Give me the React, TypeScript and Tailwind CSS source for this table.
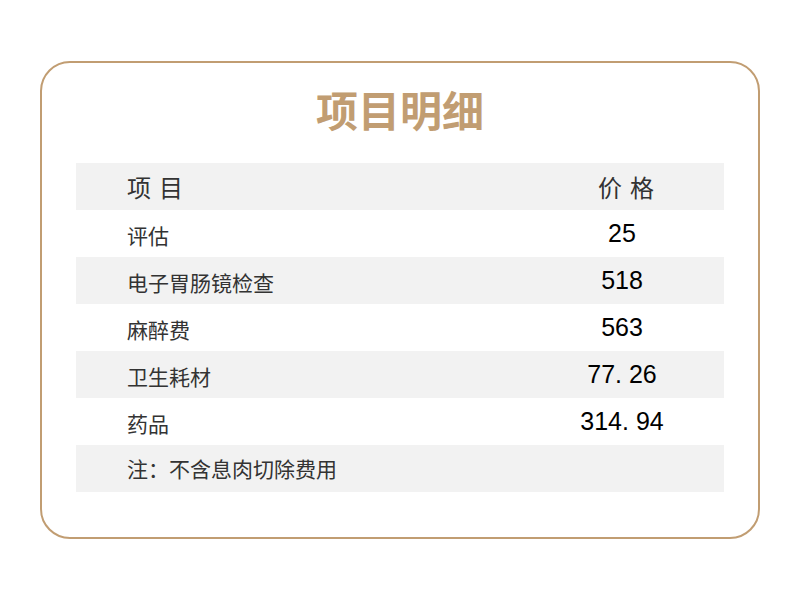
const rows = [
  { name: '评估', price: '25' },
  { name: '电子胃肠镜检查', price: '518' },
  { name: '麻醉费', price: '563' },
  { name: '卫生耗材', price: '77. 26' },
  { name: '药品', price: '314. 94' },
]

const cjk = "font-['Noto_Sans_CJK_SC',sans-serif]"

export default function App() {
  return (
    <div className={`w-[800px] h-[600px] bg-white pt-[61px] px-[40px] ${cjk}`}>
      <div className="h-[478px] border-2 border-[#c19d72] rounded-[30px] px-[34px] pt-[18px]">
        {/* 标题 */}
        <h1 className="text-center text-[42px] leading-[56px] font-bold text-[#c19d72]">项目明细</h1>

        <div className="mt-[26px]">
          {/* 表头 */}
          <div className="flex items-center h-[47px] bg-[#f2f2f2] text-[#333] text-[24px]">
            <div className="flex-1 pl-[51px] flex gap-[8px]">
              <span>项</span>
              <span>目</span>
            </div>
            <div className="w-[204px] pl-[8px] flex justify-center gap-[8px]">
              <span>价</span>
              <span>格</span>
            </div>
          </div>

          {rows.map((r, i) => (
            <div
              key={r.name}
              className={`flex items-center h-[47px] ${i % 2 === 1 ? 'bg-[#f2f2f2]' : 'bg-white'}`}
            >
              <div className="flex-1 pl-[51px] text-[21px] text-[#333] pt-[4px]">{r.name}</div>
              <div className="w-[204px] text-center text-[25px] text-black font-['Liberation_Sans',sans-serif]">
                {r.price}
              </div>
            </div>
          ))}

          {/* 备注 */}
          <div className="flex items-center h-[47px] bg-[#f2f2f2]">
            <div className="pl-[51px] text-[21px] text-[#333]">注：不含息肉切除费用</div>
          </div>
        </div>
      </div>
    </div>
  )
}
